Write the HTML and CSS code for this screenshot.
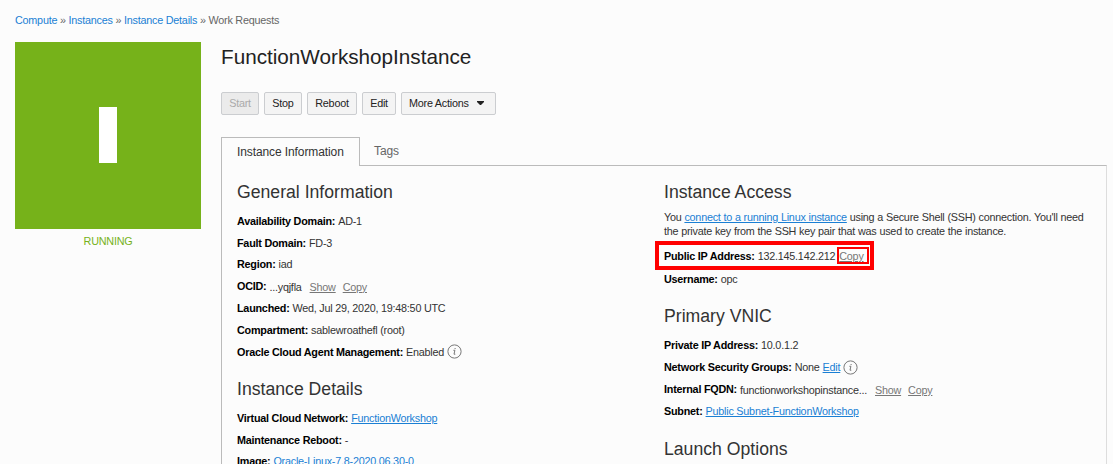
FILE: index.html
```html
<!DOCTYPE html>
<html lang="en">
<head>
<meta charset="utf-8">
<title>FunctionWorkshopInstance</title>
<link rel="stylesheet" href="styles.css">
</head>
<body>
<nav class="breadcrumb"><a href="#">Compute</a> » <a href="#">Instances</a> » <a href="#">Instance Details</a> » Work Requests</nav>
<div class="layout">
  <aside class="status">
    <div class="status-tile"><div class="status-bar"></div></div>
    <div class="status-label">RUNNING</div>
  </aside>
  <main class="main">
    <h1 class="title">FunctionWorkshopInstance</h1>
    <div class="actions">
      <button class="btn btn-start" disabled>Start</button>
      <button class="btn btn-stop">Stop</button>
      <button class="btn btn-reboot">Reboot</button>
      <button class="btn btn-edit">Edit</button>
      <button class="btn btn-more">More Actions<svg class="caret" viewBox="0 0 7 4"><path d="M0 0h7v1L4 4H3L0 1z" fill="#222"/></svg></button>
    </div>
    <div class="tabs">
      <div class="tab tab-active">Instance Information</div>
      <div class="tab tab-idle">Tags</div>
    </div>
    <div class="panel">
      <section class="col col-left">
        <h2 class="heading">General Information</h2>
        <div class="rows">
          <div class="row"><b>Availability Domain:</b><span>AD-1</span></div>
          <div class="row"><b>Fault Domain:</b><span>FD-3</span></div>
          <div class="row"><b>Region:</b><span>iad</span></div>
          <div class="row"><b>OCID:</b><span class="low">...yqjfla</span><a class="muted first" href="#">Show</a><a class="muted" href="#">Copy</a></div>
          <div class="row"><b>Launched:</b><span>Wed, Jul 29, 2020, 19:48:50 UTC</span></div>
          <div class="row"><b>Compartment:</b><span>sablewroathefl (root)</span></div>
          <div class="row"><b>Oracle Cloud Agent Management:</b><span>Enabled</span><svg class="info" viewBox="0 0 15 15"><circle cx="7.5" cy="7.5" r="6.6" fill="none" stroke="#777" stroke-width="1"/><path d="M6.4 6.3h1.5L7 10.2h1.3M8.1 4v1.1" fill="none" stroke="#777" stroke-width="1"/></svg></div>
        </div>
        <h2 class="heading heading-details">Instance Details</h2>
        <div class="rows">
          <div class="row"><b>Virtual Cloud Network:</b><a class="link" href="#">FunctionWorkshop</a></div>
          <div class="row"><b>Maintenance Reboot:</b><span>-</span></div>
          <div class="row"><b>Image:</b><a class="link" href="#">Oracle-Linux-7.8-2020.06.30-0</a></div>
        </div>
      </section>
      <section class="col col-right">
        <h2 class="heading">Instance Access</h2>
        <p class="note">You <a class="link" href="#">connect to a running Linux instance</a> using a Secure Shell (SSH) connection. You'll need<br>the private key from the SSH key pair that was used to create the instance.</p>
        <div class="highlight">
          <div class="row"><b>Public IP Address:</b><span>132.145.142.212</span><a class="muted boxed" href="#">Copy</a></div>
        </div>
        <div class="row row-user"><b>Username:</b><span>opc</span></div>
        <h2 class="heading heading-vnic">Primary VNIC</h2>
        <div class="rows rows-vnic">
          <div class="row"><b>Private IP Address:</b><span>10.0.1.2</span></div>
          <div class="row"><b>Network Security Groups:</b><span>None</span><a class="link" href="#">Edit</a><svg class="info" viewBox="0 0 15 15"><circle cx="7.5" cy="7.5" r="6.6" fill="none" stroke="#777" stroke-width="1"/><path d="M6.4 6.3h1.5L7 10.2h1.3M8.1 4v1.1" fill="none" stroke="#777" stroke-width="1"/></svg></div>
          <div class="row"><b>Internal FQDN:</b><span class="low">functionworkshopinstance...</span><a class="muted first" href="#">Show</a><a class="muted" href="#">Copy</a></div>
          <div class="row"><b>Subnet:</b><a class="link" href="#">Public Subnet-FunctionWorkshop</a></div>
        </div>
        <h2 class="heading heading-launch">Launch Options</h2>
      </section>
    </div>
  </main>
</div>
</body>
</html>
```
FILE: styles.css
```css
* { box-sizing: border-box; }
body {
  margin: 0;
  height: 464px;
  overflow: hidden;
  background: #fcfcfc;
  color: #333;
  font: 10.8px/14px "Liberation Sans", Arial, sans-serif;
  letter-spacing: -0.23px;
}
a { color: #1a7fd4; text-decoration: none; }
.breadcrumb { padding: 13px 0 0 15px; height: 42px; color: #666; }
.layout { display: flex; gap: 20px; padding-left: 15px; }
.status { width: 186px; flex: none; }
.status-tile {
  height: 187px;
  background: #76b21a;
  display: flex;
  align-items: center;
  justify-content: center;
}
.status-bar { width: 18px; height: 56px; margin-top: -1px; background: #fff; }
.status-label { margin-top: 5px; text-align: center; color: #76b21a; }
.main { width: 886px; flex: none; }
.title { margin: 0; padding-top: 3px; height: 50px; font-size: 20.7px; letter-spacing: 0; line-height: 24px; font-weight: 400; color: #222; }
.actions { display: flex; gap: 5px; height: 45px; }
.btn {
  height: 23px;
  padding: 0 0 1px;
  border: 1px solid #cbcdd0;
  border-radius: 2px;
  background: #f4f4f4;
  color: #222;
  font: inherit;
  letter-spacing: inherit;
}
.btn-start { width: 38px; background: #ebebeb; color: #aaa; }
.btn-stop { width: 38px; }
.btn-reboot { width: 50px; }
.btn-edit { width: 34px; }
.btn-more { width: 95px; display: flex; align-items: center; padding-left: 7px; }
.caret { width: 7px; height: 4px; margin-left: 8px; }
.tabs { display: flex; height: 28px; font-size: 12px; letter-spacing: -0.1px; }
.tab-active {
  width: 139px;
  height: 29px;
  padding: 7px 0 0 15px;
  border: 1px solid #bbb;
  border-bottom: 0;
  background: #fcfcfc;
  z-index: 1;
}
.tab-idle { padding: 7px 0 0 14px; color: #666; }
.panel {
  display: flex;
  height: 320px;
  padding: 0 0 0 15px;
  border: 1px solid #bbb;
  border-right-color: #ddd;
}
.col-left { width: 427px; }
.heading { margin: 0; padding-top: 15px; height: 44px; font-size: 17.65px; letter-spacing: 0; line-height: 22px; font-weight: 400; color: #333; }
.row { display: flex; align-items: center; gap: 3px; height: 21.8px; white-space: nowrap; }
.row b { color: #000; }
.link { text-decoration: underline; }
.muted { color: #777; text-decoration: underline; margin-left: 4px; padding-top: 1px; }
.first { margin-left: 5px; }
.low { padding-top: 1px; }
.info { width: 15px; height: 15px; }
.heading-details { padding-top: 15.5px; height: 44.4px; }
.note { margin: 0; word-spacing: 0.12px; }
.highlight {
  width: 219px;
  height: 29px;
  margin: 3px 0 0 -9px;
  padding-left: 5px;
  border: 4px solid #f00;
}
.boxed {
  width: 32px;
  height: 17px;
  margin-left: -1px;
  padding: 0;
  border: 2px solid #f00;
}
.row-user { margin-top: -2px; }
.heading-vnic { padding-top: 15px; height: 44px; }
.rows-vnic .row { height: 22.2px; }
.heading-launch { padding-top: 15px; }
```
